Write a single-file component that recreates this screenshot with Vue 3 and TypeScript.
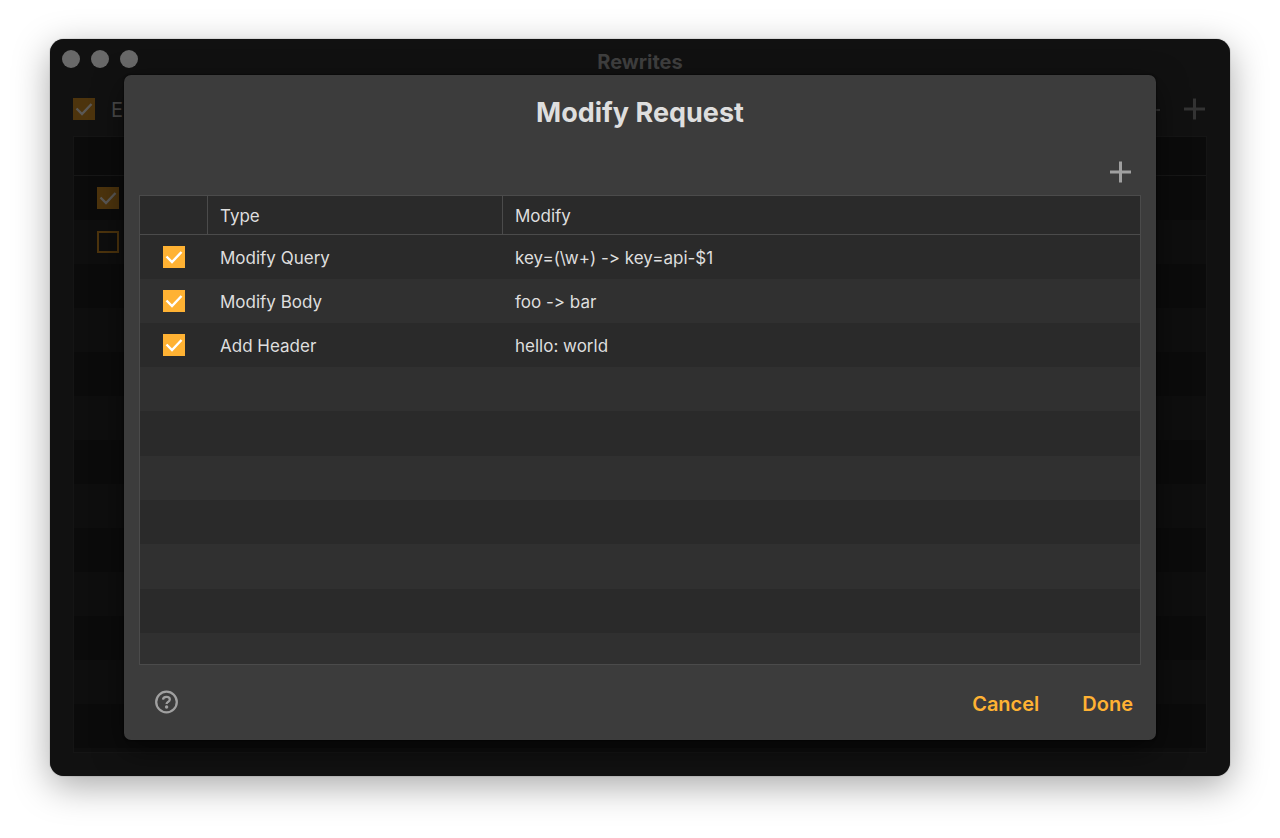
<script setup lang="ts">
import { ref } from 'vue'

interface Rule {
  id: string
  enabled: boolean
  type: string
  modify: string
}

const rules = ref<Rule[]>([
  { id: 'query', enabled: true, type: 'Modify Query', modify: 'key=(\\w+) -> key=api-$1' },
  { id: 'body', enabled: true, type: 'Modify Body', modify: 'foo -> bar' },
  { id: 'header', enabled: true, type: 'Add Header', modify: 'hello: world' },
])

const rewritesEnabled = ref<boolean>(true)
const rewrites = ref<boolean[]>([true, false])
</script>

<template>
  <main class="desktop">
    <div class="window">
      <section class="backdrop" inert>
        <header class="titlebar">
          <div class="lights"><i></i><i></i><i></i></div>
          <h1>Rewrites</h1>
        </header>
        <div class="toolbar">
          <label class="enable">
            <span class="check dim">
              <input v-model="rewritesEnabled" type="checkbox" />
              <svg viewBox="0 0 22 22"><path d="M3.500 10.500l5.500 5.500 9.500-10" /></svg>
            </span>
            <span class="enable-text">Enable</span>
          </label>
          <div class="tools">
            <button type="button" aria-label="Import">
              <svg class="small" viewBox="0 0 14 14"><path d="M8 1v13M2 8h11" /></svg>
            </button>
            <button type="button" aria-label="Add rewrite">
              <svg viewBox="0 0 22 22"><path d="M10.500 0.500v21M0 11h21" /></svg>
            </button>
          </div>
        </div>
        <div class="list">
          <div class="list-head"></div>
          <ul>
            <li v-for="(_, i) in rewrites" :key="i">
              <span class="check dim">
                <input v-model="rewrites[i]" type="checkbox" :aria-label="`Rewrite ${i + 1}`" />
                <svg viewBox="0 0 22 22"><path d="M3.500 10.500l5.500 5.500 9.500-10" /></svg>
              </span>
            </li>
          </ul>
        </div>
      </section>

      <section class="dialog" role="dialog" aria-labelledby="dialog-title">
        <h2 id="dialog-title">Modify Request</h2>
        <div class="actions">
          <button type="button" class="add" aria-label="Add rule">
            <svg viewBox="0 0 22 22"><path d="M10.500 0.500v21M0 11h21" /></svg>
          </button>
        </div>
        <div class="grid">
          <table>
            <colgroup>
              <col class="col-check" />
              <col class="col-type" />
              <col />
            </colgroup>
            <thead>
              <tr>
                <th></th>
                <th scope="col">Type</th>
                <th scope="col">Modify</th>
              </tr>
            </thead>
            <tbody>
              <tr v-for="rule in rules" :key="rule.id">
                <td class="cell-check">
                  <span class="check">
                    <input v-model="rule.enabled" type="checkbox" :aria-label="rule.type" />
                    <svg viewBox="0 0 22 22"><path d="M3.500 10.500l5.500 5.500 9.500-10" /></svg>
                  </span>
                </td>
                <td>{{ rule.type }}</td>
                <td>{{ rule.modify }}</td>
              </tr>
            </tbody>
          </table>
          <div class="filler">
            <div v-for="n in 7" :key="n"></div>
          </div>
        </div>
        <footer>
          <button type="button" class="help" aria-label="Help">
            <svg viewBox="0 0 24 24">
              <circle cx="12.500" cy="12" r="10.300" />
              <path d="M9 9.600c.1-1.700 1.500-2.700 3.400-2.700 2 0 3.400 1 3.400 2.600 0 1.300-.8 1.800-1.800 2.400-.9.600-1.400 1-1.400 2" />
              <circle class="dot" cx="12.600" cy="17" r="1.700" />
            </svg>
          </button>
          <div class="choices">
            <button type="button">Cancel</button>
            <button type="button">Done</button>
          </div>
        </footer>
      </section>
    </div>
  </main>
</template>

<style>
body {
  margin: 0;
  background: #fff;
}
</style>

<style scoped>
* {
  box-sizing: border-box;
}

.desktop {
  display: flex;
  min-height: 100vh;
  padding: 39px 50px 62px;
  font-family: Inter, 'Liberation Sans', sans-serif;
  font-size: 17px;
  line-height: 24px;
  font-variant-ligatures: no-contextual;
  color: #dedede;
}

.window {
  flex: 1;
  display: grid;
  grid-template: minmax(0, 1fr) / minmax(0, 1fr);
  background: #111;
  border-radius: 14px;
  box-shadow:
    0 0 1px #333,
    0 10px 36px rgba(0, 0, 0, 0.34);
  overflow: hidden;
}

.backdrop,
.dialog {
  grid-area: 1 / 1;
  display: flex;
  flex-direction: column;
}

button {
  margin: 0;
  padding: 0;
  border: 0;
  background: none;
  font: inherit;
  color: inherit;
  display: grid;
  place-items: center;
  cursor: pointer;
}

button svg {
  width: 22px;
  height: 22px;
  fill: none;
  stroke: currentColor;
  stroke-width: 3;
}

.titlebar {
  display: grid;
  grid-template-columns: 1fr auto 1fr;
  align-items: center;
  height: 44px;
  padding: 0 12px;
}

.lights {
  display: flex;
  gap: 11px;
  padding-bottom: 4px;
}

.lights i {
  width: 18px;
  height: 18px;
  border-radius: 50%;
  background: #696969;
}

h1 {
  margin: 0;
  padding-top: 2px;
  font-size: 20px;
  font-weight: 700;
  color: #3f3f3f;
}

.toolbar {
  display: flex;
  justify-content: space-between;
  align-items: center;
  height: 53px;
  padding: 0 24px 2px 23px;
}

.enable {
  display: flex;
  align-items: center;
  gap: 16px;
  font-size: 20px;
  color: #4a4a4a;
}

.enable-text {
  padding-top: 2px;
}

.tools {
  display: flex;
  align-items: center;
  gap: 23px;
  color: #333;
}

.tools .small {
  width: 14px;
  height: 14px;
  stroke-width: 2;
}

.check {
  display: inline-grid;
  width: 22px;
  height: 22px;
  vertical-align: middle;
}

.check input,
.check svg {
  grid-area: 1 / 1;
  width: 22px;
  height: 22px;
  margin: 0;
}

.check input {
  appearance: none;
  border: 2px solid #ffb233;
}

.check input:checked {
  background: #ffb233;
}

.check svg {
  display: none;
  fill: none;
  stroke: #fff;
  stroke-width: 2.4;
  pointer-events: none;
}

.check input:checked + svg {
  display: block;
}

.dim input {
  border-color: #4d340d;
}

.dim input:checked {
  background: #4d340d;
}

.dim svg {
  stroke: #5a5856;
}

.list {
  flex: 1;
  display: flex;
  flex-direction: column;
  margin: 0 23px;
  margin-bottom: 23px;
  border: 1px solid #151515;
}

.list-head {
  height: 39px;
  border-bottom: 1px solid #171717;
  background: #0b0b0b;
}

ul {
  flex: 1;
  margin: 0;
  padding: 0;
  list-style: none;
  background: repeating-linear-gradient(#0b0b0b 0 44px, #0e0e0e 44px 88px);
}

li {
  display: flex;
  align-items: center;
  height: 44px;
  padding-left: 23px;
}

.dialog {
  margin: 36px 74px;
  padding: 0 15px;
  border-radius: 7px;
  background: #3c3c3c;
  box-shadow:
    0 0 2px #000,
    0 10px 30px rgba(0, 0, 0, 0.5);
}

h2 {
  margin: 0;
  padding-top: 22px;
  font-size: 27px;
  line-height: 32px;
  font-weight: 700;
  text-align: center;
}

.actions {
  display: flex;
  justify-content: flex-end;
  padding: 32px 9px 12px;
  color: #a0a0a0;
}

.grid {
  flex: 1;
  display: flex;
  flex-direction: column;
  border: 1px solid #4b4b4b;
  background: #2a2a2a;
}

table {
  width: 100%;
  table-layout: fixed;
  border-collapse: separate;
  border-spacing: 0;
}

.col-check {
  width: 68px;
}

.col-type {
  width: 295px;
}

th {
  height: 39px;
  padding: 2px 12px 0;
  border-bottom: 1px solid #4b4b4b;
  font-weight: 400;
  text-align: left;
}

th:not(:last-child) {
  border-right: 1px solid #4b4b4b;
}

td {
  height: 44px;
  padding: 2px 12px 0;
}

.cell-check {
  padding: 0;
  text-align: center;
  line-height: 0;
}

tbody tr:nth-child(even) {
  background: #303030;
}

.filler {
  flex: 1;
  display: flex;
  flex-direction: column;
}

.filler div {
  flex: 1;
}

.filler div:nth-child(odd) {
  background: #303030;
}

.filler div:last-child {
  flex: none;
  height: 31px;
}

footer {
  display: flex;
  justify-content: space-between;
  align-items: center;
  height: 75px;
  padding: 0 8px 2px 15px;
}

.help {
  color: #a0a0a0;
}

.help svg {
  width: 24px;
  height: 24px;
  stroke-width: 2.300;
}

.help .dot {
  fill: currentColor;
  stroke: none;
}

.choices {
  display: flex;
  gap: 43px;
  padding-top: 4px;
  font-size: 20px;
  font-weight: 600;
  color: #ffb233;
}
</style>
